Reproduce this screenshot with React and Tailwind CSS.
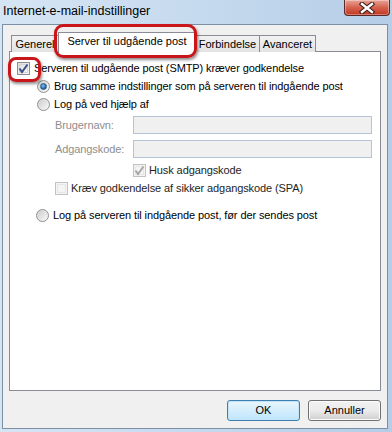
import React from "react";

const font = { fontFamily: '"Liberation Sans", Arial, sans-serif' };

const CheckBox = ({ checked, disabled }) => (
  <div
    className={`relative w-[13px] h-[13px] border flex items-center justify-center shrink-0 ${
      disabled ? "border-[#c2c2c2] bg-[#f4f4f4]" : "border-[#8f8f8f] bg-gradient-to-br from-[#dcdcdc] to-[#fbfbfb]"
    }`}
  >
    <div className={`w-[9px] h-[9px] border ${disabled ? "border-[#e6e6e6]" : "border-[#d5d5d5]"}`} />
    {checked && (
      <svg width="13" height="13" viewBox="0 0 13 13" className="absolute -left-[1px] -top-[1px]">
        <path
          d="M2.5 6.5 L5 10 L10.5 2.5"
          fill="none"
          stroke={disabled ? "#a8a8a8" : "#3a4d85"}
          strokeWidth="2"
        />
      </svg>
    )}
  </div>
);

const Radio = ({ checked }) => (
  <div className="w-[13px] h-[13px] rounded-full border border-[#8e8f8f] bg-gradient-to-br from-[#d2d2d2] to-[#fafafa] flex items-center justify-center shrink-0">
    {checked ? (
      <div className="w-[7px] h-[7px] rounded-full bg-[radial-gradient(circle_at_40%_35%,#7cc3f2,#1d5f9e_70%)] border border-[#2b5a8a]" />
    ) : (
      <div className="w-[9px] h-[9px] rounded-full bg-gradient-to-br from-[#cfcfcf] to-[#f6f6f6]" />
    )}
  </div>
);

const Tab = ({ label, w }) => (
  <div
    className={`h-[17px] border border-b-0 border-[#898c95] bg-gradient-to-b from-[#f2f2f2] to-[#e3e3e3] flex items-center justify-center ${w}`}
  >
    <span className="text-[11px] text-black">{label}</span>
  </div>
);

const Button = ({ label, primary }) => (
  <div
    className={`w-[73px] h-[21px] rounded-[3px] border flex items-center justify-center ${
      primary
        ? "border-[#3c7fb1] bg-gradient-to-b from-[#eaf6fd] to-[#bee6fd] shadow-[inset_0_0_0_1px_#c3e4f6]"
        : "border-[#707070] bg-gradient-to-b from-[#f2f2f2] via-[#ebebeb] to-[#cfcfcf] shadow-[inset_0_0_0_1px_#fbfbfb]"
    }`}
  >
    <span className="text-[11px] text-black">{label}</span>
  </div>
);

export default function App() {
  return (
    <div
      className="relative w-[392px] h-[432px] overflow-hidden flex flex-col bg-gradient-to-r from-[#d6e5f4] via-[#c6daee] to-[#b5cde7]"
      style={font}
    >
      {/* title bar */}
      <div className="h-[24px] shrink-0 flex items-center pl-[3px] pb-[1px]">
        <span className="text-[12.5px] text-black">Internet-e-mail-indstillinger</span>
      </div>
      <div className="absolute top-0 right-[2px] w-[46px] h-[16px] rounded-b-[4px] border border-t-0 border-[#5a2a2a] bg-gradient-to-b from-[#e8a396] via-[#d5624f] to-[#c2351f] flex items-center justify-center shadow-[inset_0_0_0_1px_rgba(255,255,255,0.35)]">
        <svg width="16" height="12" viewBox="0 0 16 12">
          <path d="M3 2 L13 10 M13 2 L3 10" stroke="#3b1b16" strokeWidth="4.5" strokeLinecap="square" />
          <path d="M3 2 L13 10 M13 2 L3 10" stroke="#ffffff" strokeWidth="2.4" strokeLinecap="square" />
        </svg>
      </div>

      {/* client */}
      <div className="flex-1 ml-[2px] mr-[4px] mb-[3px] border border-[#7d8fa5] bg-[#f0f0f0] flex flex-col px-[6px] pt-[7px]">
        {/* tabs */}
        <div className="flex items-end pl-[2px] h-[20px] relative z-10">
          <Tab label="Generel" w="w-[48px]" />
          <div className="w-[138px] h-[21px] -mx-[1px] border border-b-0 border-[#898c95] bg-white flex items-center justify-center -mb-[1px] pb-[3px]">
            <span className="text-[11px] text-black">Server til udgående post</span>
          </div>
          <Tab label="Forbindelse" w="w-[65px]" />
          <Tab label="Avanceret" w="w-[57px] -ml-[1px]" />
        </div>

        {/* panel */}
        <div className="h-[340px] -mt-[1px] border border-[#898c95] bg-white flex flex-col text-[11px] text-black tracking-[-0.1px]">
          <div className="h-[18px] mt-[7px] pl-[7px] flex items-center gap-[4px]">
            <CheckBox checked />
            <span>Serveren til udgående post (SMTP) kræver godkendelse</span>
          </div>
          <div className="h-[18px] pl-[27px] flex items-center gap-[4px]">
            <Radio checked />
            <span>Brug samme indstillinger som på serveren til indgående post</span>
          </div>
          <div className="h-[18px] pl-[27px] flex items-center gap-[4px]">
            <Radio />
            <span>Log på ved hjælp af</span>
          </div>
          <div className="h-[18px] mt-[3px] pl-[45px] flex items-center">
            <span className="w-[78px] text-[#8e8e8e]">Brugernavn:</span>
            <div className="w-[239px] h-[18px] border border-[#b5c3d6] bg-[#f0f0f0]" />
          </div>
          <div className="h-[18px] mt-[6px] pl-[45px] flex items-center">
            <span className="w-[78px] text-[#8e8e8e]">Adgangskode:</span>
            <div className="w-[239px] h-[18px] border border-[#b5c3d6] bg-[#f0f0f0]" />
          </div>
          <div className="h-[18px] mt-[3px] pl-[123px] flex items-center gap-[3px]">
            <CheckBox checked disabled />
            <span className="text-[#1e1e1e]">Husk adgangskode</span>
          </div>
          <div className="h-[18px] pl-[45px] flex items-center gap-[3px]">
            <CheckBox disabled />
            <span className="text-[#1e1e1e]">Kræv godkendelse af sikker adgangskode (SPA)</span>
          </div>
          <div className="h-[18px] mt-[9px] pl-[26px] flex items-center gap-[4px]">
            <Radio />
            <span>Log på serveren til indgående post, før der sendes post</span>
          </div>
        </div>

        {/* buttons */}
        <div className="flex justify-end gap-[8px] mt-[9px]">
          <Button label="OK" primary />
          <Button label="Annuller" />
        </div>
      </div>

      {/* red highlight rings */}
      <div className="absolute left-[54px] top-[24px] w-[143px] h-[34px] rounded-[9px] border-[3px] border-[#c8161b] shadow-[1px_2px_3px_rgba(0,0,0,0.45)] z-20" />
      <div className="absolute left-[8px] top-[57px] w-[33px] h-[25px] rounded-[8px] border-[3px] border-[#c8161b] shadow-[1px_2px_3px_rgba(0,0,0,0.45)] z-20" />
    </div>
  );
}
